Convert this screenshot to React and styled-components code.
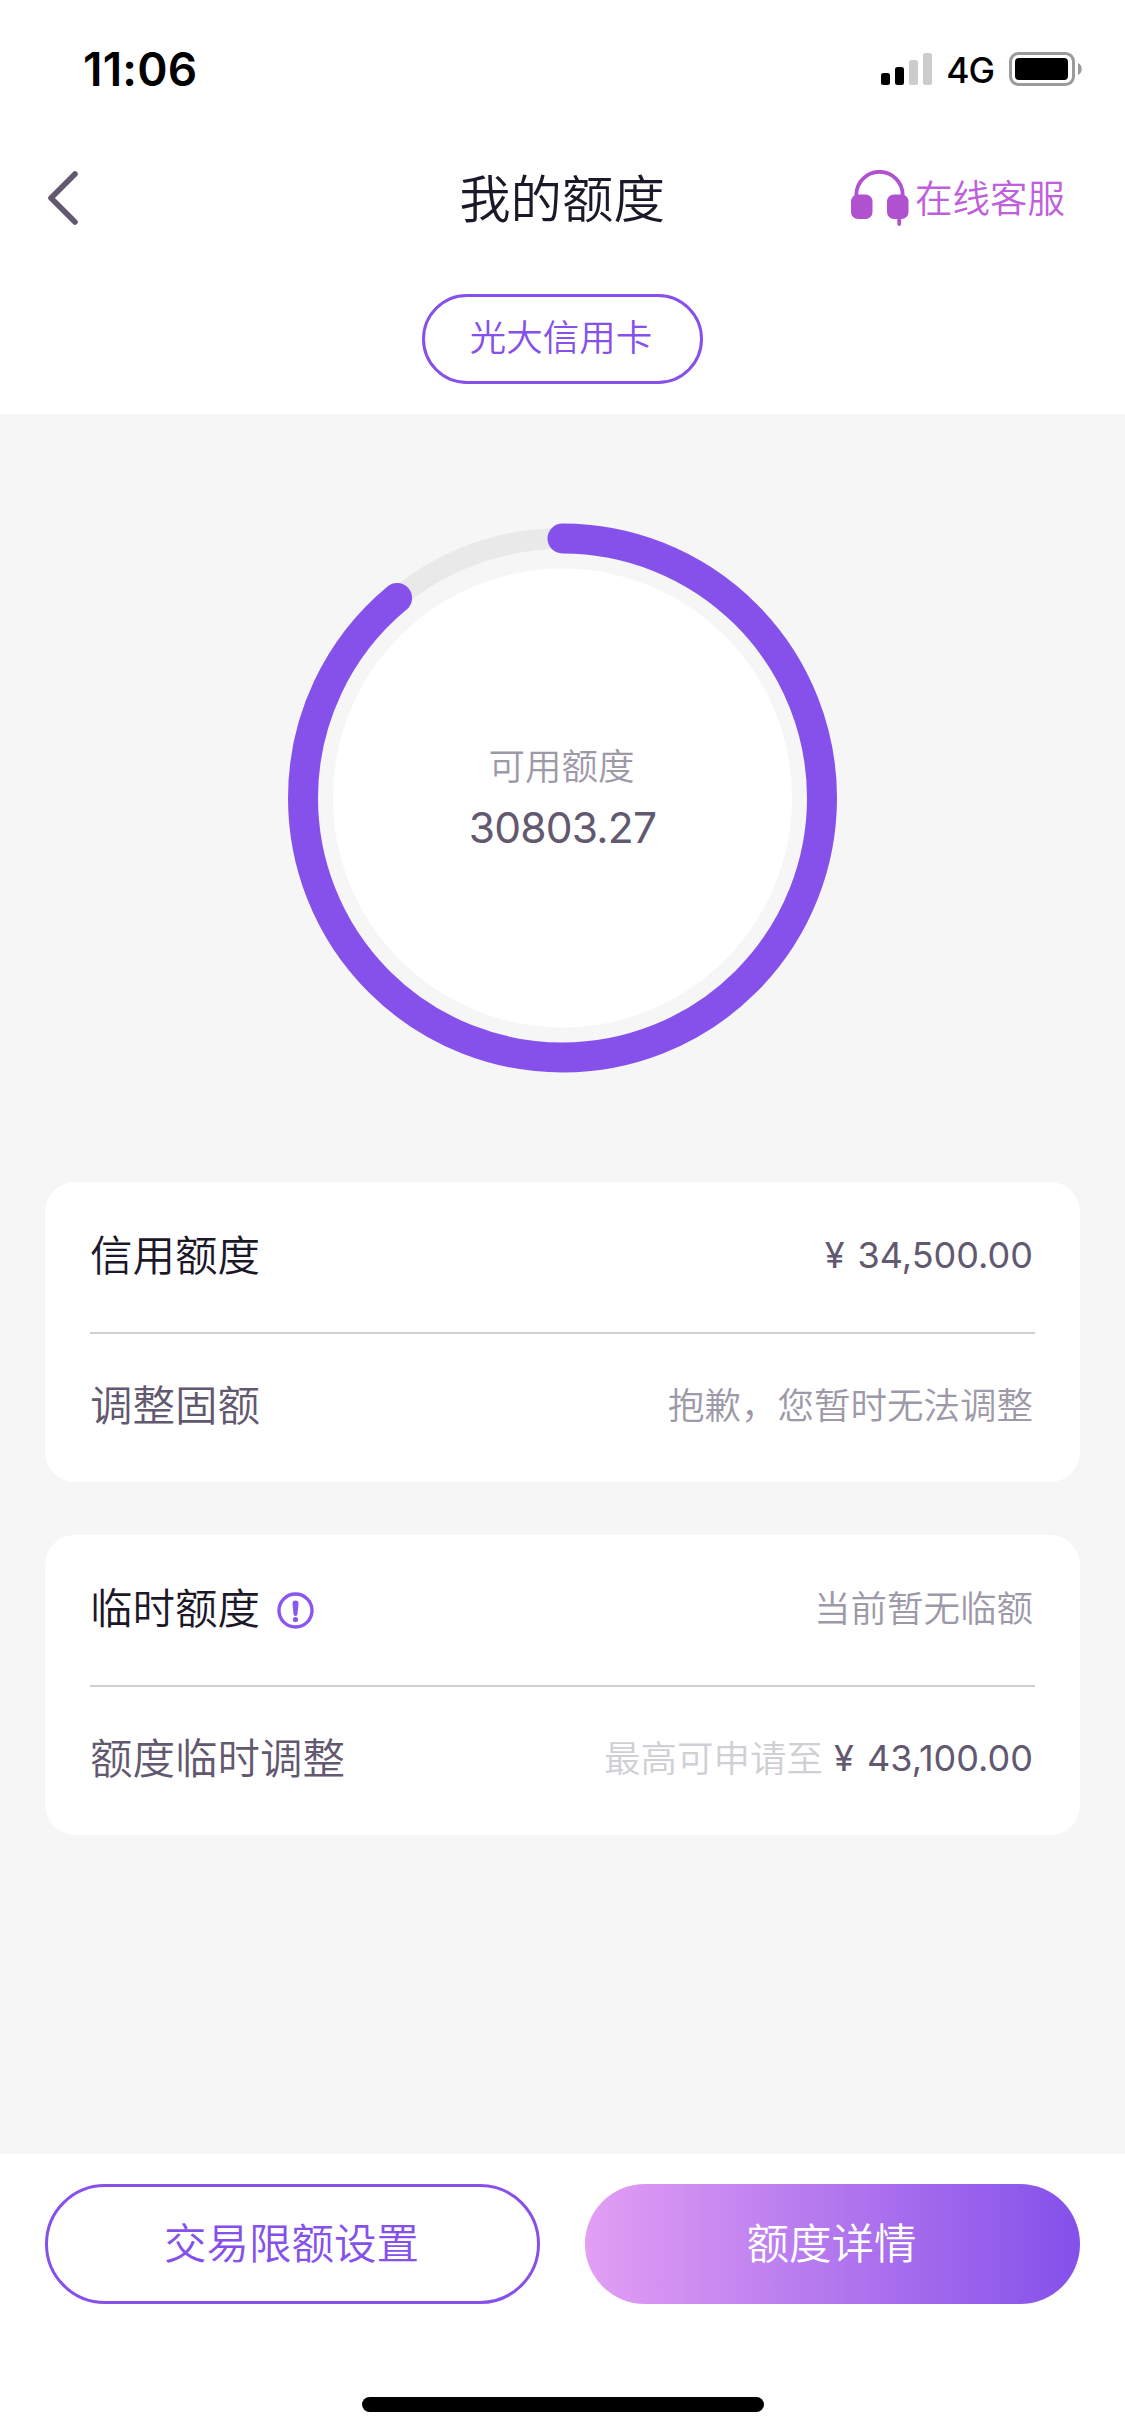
import React from 'react';
import styled, { createGlobalStyle } from 'styled-components';

const GlobalStyle = createGlobalStyle`
  body {
    margin: 0;
    background: #fff;
    font-family: Inter, "Noto Sans CJK SC", sans-serif;
    font-weight: 350;
  }
`;

const Page = styled.div`
  width: 1125px;
  height: 2436px;
  display: flex;
  flex-direction: column;
  overflow: hidden;
  background: #fff;
`;

const StatusBar = styled.div`
  height: 132px;
  box-sizing: border-box;
  padding: 6px 42px 0 83px;
  display: flex;
  align-items: center;
  justify-content: space-between;
  color: #000;
`;

const Clock = styled.div`
  font-size: 46px;
  font-weight: 600;
  line-height: 56px;
  letter-spacing: 0.2px;
`;

const StatusIcons = styled.div`
  display: flex;
  align-items: center;
`;

const Network = styled.span`
  margin: 3px 15px 0 13px;
  font-size: 35.5px;
  font-weight: 500;
  line-height: 44px;
  letter-spacing: -1px;
`;

const NavBar = styled.div`
  height: 132px;
  display: grid;
  grid-template-columns: 1fr auto 1fr;
  align-items: center;
  padding: 0 60px 0 48px;
`;

const Title = styled.h1`
  margin: 0 0 0 11px;
  padding-top: 1px;
  font-size: 51.4px;
  font-weight: 350;
  line-height: 60px;
  color: #1d1829;
`;

const Service = styled.div`
  display: flex;
  align-items: center;
  justify-self: end;
  gap: 6px;
  font-size: 37.5px;
  line-height: 56px;
  color: #be60dc;
  >span {
    padding-top: 2px;
  }
`;

const CardTabs = styled.div`
  height: 150px;
  box-sizing: border-box;
  padding-top: 30px;
  display: flex;
  justify-content: center;
`;

const Pill = styled.div`
  width: 281px;
  height: 90px;
  box-sizing: border-box;
  padding-right: 3px;
  border: 3px solid #8651eb;
  border-radius: 45px;
  font-size: 36.5px;
  line-height: 82px;
  text-align: center;
  color: #8651eb;
`;

const Main = styled.main`
  flex: 1;
  background: #f6f6f6;
`;

const Gauge = styled.div`
  height: 768px;
  display: grid;
  place-items: center;
  >* {
    grid-area: 1 / 1;
  }
`;

const GaugeText = styled.div`
  display: flex;
  flex-direction: column;
  align-items: center;
  padding-top: 3px;
`;

const GaugeLabel = styled.div`
  padding-right: 2px;
  font-size: 36.5px;
  line-height: 56px;
  color: #9d99a8;
`;

const GaugeValue = styled.div`
  font-size: 42.5px;
  font-weight: 400;
  line-height: 66px;
  letter-spacing: -0.8px;
  color: #625970;
`;

const Card = styled.section`
  height: 300px;
  margin: 0 45px 53px;
  padding: 0 45px;
  box-sizing: border-box;
  border-radius: 30px;
  background: #fff;
`;

const Row = styled.div`
  height: 148px;
  box-sizing: border-box;
  padding-bottom: 5px;
  display: flex;
  align-items: center;
  justify-content: space-between;
  &:first-child {
    height: 152px;
    padding-bottom: 2px;
    border-bottom: 2px solid #d0d0d0;
  }
`;

const RowLabel = styled.div`
  display: flex;
  align-items: center;
  gap: 17px;
  font-size: 42.5px;
  line-height: 60px;
  color: ${(props) => (props.$strong ? '#1d1829' : '#625970')};
`;

const RowValue = styled.div`
  display: flex;
  align-items: center;
  gap: 11px;
  padding-right: 2px;
  font-size: 36.5px;
  line-height: 56px;
  color: #9d99a8;
`;

const Amount = styled.span`
  padding-bottom: 2px;
  font-size: 36px;
  font-weight: 400;
  word-spacing: 3px;
  color: #625970;
`;

const Hint = styled.span`
  color: #d0cfd5;
`;

const Footer = styled.footer`
  height: 282px;
  box-sizing: border-box;
  padding: 30px 45px 24px;
  display: flex;
  flex-direction: column;
  align-items: center;
  justify-content: space-between;
`;

const Actions = styled.div`
  width: 100%;
  display: grid;
  grid-template-columns: 1fr 1fr;
  gap: 45px;
`;

const Button = styled.button`
  height: 120px;
  box-sizing: border-box;
  padding: 0 2px 8px 0;
  border: ${(props) => (props.$primary ? 'none' : '3px solid #8651eb')};
  border-radius: 60px;
  background: ${(props) => (props.$primary ? 'linear-gradient(90deg, #e29ff4, #b377ee 50%, #8450ea)' : 'transparent')};
  font-family: inherit;
  font-size: 42.5px;
  font-weight: 350;
  color: ${(props) => (props.$primary ? '#fff' : '#8651eb')};
`;

const HomeIndicator = styled.div`
  width: 402px;
  height: 15px;
  border-radius: 8px;
  background: #000;
`;

function SignalIcon() {
  return (
    <svg width="52" height="34" viewBox="0 0 52 34">
      <rect x="0" y="21" width="9" height="12" rx="2.5" />
      <rect x="14" y="15" width="9" height="18" rx="2.5" />
      <rect x="28" y="8" width="9" height="25" rx="2.5" fill="#ccc" />
      <rect x="42" y="1" width="9" height="32" rx="2.5" fill="#ccc" />
    </svg>
  );
}

function BatteryIcon() {
  return (
    <svg width="74" height="34" viewBox="0 0 74 34">
      <rect x="1.5" y="1.5" width="63" height="31" rx="8" fill="none" stroke="#9b9b9b" strokeWidth="3" />
      <rect x="6" y="6" width="53" height="22" rx="4" />
      <path d="M69 11c5 2 5 10 0 12z" fill="#9b9b9b" />
    </svg>
  );
}

function BackIcon() {
  return (
    <svg width="32" height="54" viewBox="0 0 32 54" fill="none" stroke="#625970" strokeWidth="5.6" strokeLinecap="round" strokeLinejoin="round">
      <path d="M27 3L3 27l24 24" />
    </svg>
  );
}

function HeadsetIcon() {
  return (
    <svg width="58" height="56" viewBox="0 0 58 56" fill="#b052d0">
      <path d="M5.3 27v-2a23.2 23.2 0 0 1 46.4 0v2" fill="none" stroke="#b052d0" strokeWidth="3.8" />
      <rect x="0" y="24.5" width="21.5" height="24.5" rx="7" />
      <rect x="36" y="24.5" width="21.5" height="24.5" rx="7" />
      <path d="M48.2 47v7" stroke="#b052d0" strokeWidth="3.8" strokeLinecap="round" />
    </svg>
  );
}

function InfoIcon() {
  return (
    <svg width="37" height="39" viewBox="0 -2 37 39" fill="#8a55f0">
      <circle cx="18.5" cy="18.5" r="16.5" fill="none" stroke="#8a55f0" strokeWidth="3.4" />
      <path d="M15.5 11.5a3 3 0 0 1 6 0l-1 10.5a2 2 0 0 1-4 0z" />
      <circle cx="18.5" cy="27.5" r="2.6" />
    </svg>
  );
}

const RADIUS = 259.5;

function GaugeRing({ percent }) {
  return (
    <svg width="549" height="550" viewBox="-274.5 -275 549 550" fill="none">
      <circle r="229.5" fill="#fff" />
      <circle r={RADIUS} stroke="#e9e9e9" strokeWidth="21" />
      <circle
        r={RADIUS}
        stroke="#8651eb"
        strokeWidth="30"
        strokeLinecap="round"
        pathLength="100"
        strokeDasharray={`${percent} 100`}
        transform="rotate(-90)"
      />
    </svg>
  );
}

function App() {
  return (
    <Page>
      <GlobalStyle />
      <StatusBar>
        <Clock>11:06</Clock>
        <StatusIcons>
          <SignalIcon />
          <Network>4G</Network>
          <BatteryIcon />
        </StatusIcons>
      </StatusBar>
      <NavBar>
        <BackIcon />
        <Title>我的额度</Title>
        <Service>
          <HeadsetIcon />
          <span>在线客服</span>
        </Service>
      </NavBar>
      <CardTabs>
        <Pill>光大信用卡</Pill>
      </CardTabs>

      <Main>
        <Gauge>
          <GaugeRing percent={89} />
          <GaugeText>
            <GaugeLabel>可用额度</GaugeLabel>
            <GaugeValue>30803.27</GaugeValue>
          </GaugeText>
        </Gauge>

        <Card>
          <Row>
            <RowLabel $strong>信用额度</RowLabel>
            <RowValue><Amount>¥ 34,500.00</Amount></RowValue>
          </Row>
          <Row>
            <RowLabel>调整固额</RowLabel>
            <RowValue>抱歉，您暂时无法调整</RowValue>
          </Row>
        </Card>

        <Card>
          <Row>
            <RowLabel $strong>
              临时额度
              <InfoIcon />
            </RowLabel>
            <RowValue>当前暂无临额</RowValue>
          </Row>
          <Row>
            <RowLabel>额度临时调整</RowLabel>
            <RowValue>
              <Hint>最高可申请至</Hint>
              <Amount>¥ 43,100.00</Amount>
            </RowValue>
          </Row>
        </Card>
      </Main>

      <Footer>
        <Actions>
          <Button>交易限额设置</Button>
          <Button $primary>额度详情</Button>
        </Actions>
        <HomeIndicator />
      </Footer>
    </Page>
  );
}

export default App;
